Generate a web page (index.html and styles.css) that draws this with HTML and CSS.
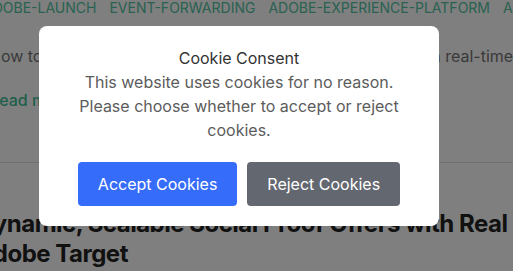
FILE: index.html
```html
<!DOCTYPE html>
<html lang="en">
<head>
<meta charset="utf-8">
<title>Cookie Consent</title>
<link rel="stylesheet" href="styles.css">
</head>
<body>
<div class="page">
  <ul class="tags">
    <li>adobe-launch</li>
    <li>event-forwarding</li>
    <li>adobe-experience-platform</li>
    <li>adobe-target</li>
  </ul>
  <p class="summary">How to create dynamic social proof offers that updates with real-time data from Adobe Experience Platform</p>
  <a class="more" href="#">Read more</a>
  <hr class="divider">
  <h2 class="title">Dynamic, Scalable Social Proof Offers with Real Time Data in Adobe Target</h2>
</div>
<div class="overlay">
  <div class="modal">
    <h3 class="modal-title">Cookie Consent</h3>
    <p class="modal-text">This website uses cookies for no reason. Please choose whether to accept or reject cookies.</p>
    <div class="actions">
      <button class="btn btn-accept">Accept Cookies</button>
      <button class="btn btn-reject">Reject Cookies</button>
    </div>
  </div>
</div>
</body>
</html>
```
FILE: styles.css
```css
html, body {
  margin: 0;
  padding: 0;
  width: 513px;
  height: 271px;
  overflow: hidden;
  background: #ffffff;
  font-family: Inter, "Noto Sans", sans-serif;
}
.page {
  width: 700px;
  margin-left: -11px;
}
.tags {
  list-style: none;
  margin: 0 0 0 -6px;
  padding: 0;
  display: flex;
  gap: 13px;
  white-space: nowrap;
}
.tags li {
  font-size: 14px;
  line-height: 16px;
  text-transform: uppercase;
  color: #52c4a2;
}
.summary {
  margin: 28px 0 0;
  font-size: 16px;
  line-height: 24px;
  color: #757575;
  white-space: nowrap;
}
.more {
  display: block;
  margin-top: 20px;
  font-size: 16px;
  line-height: 24px;
  font-weight: 500;
  color: #3fbf98;
  text-decoration: none;
}
.divider {
  margin: 50px 0 0;
  border: 0;
  border-top: 1px solid #dedede;
}
.title {
  margin: 46px 0 0 -13px;
  font-size: 24px;
  line-height: 30px;
  font-weight: 700;
  letter-spacing: -0.5px;
  color: #222;
}
.overlay {
  position: absolute;
  left: 0;
  top: 0;
  width: 513px;
  height: 271px;
  background: rgba(0, 0, 0, 0.5);
}
.modal {
  box-sizing: border-box;
  width: 400px;
  margin: 26px 0 0 39px;
  padding: 20px;
  background: #fff;
  border-radius: 8px;
  text-align: center;
}
.modal-title {
  margin: 0;
  font-size: 16px;
  line-height: 24px;
  font-weight: 400;
  color: #333;
}
.modal-text {
  margin: 0;
  font-size: 16px;
  line-height: 24px;
  color: #5c5c5c;
}
.actions {
  display: flex;
  justify-content: center;
  gap: 10px;
  margin-top: 20px;
}
.btn {
  border: 0;
  border-radius: 4px;
  padding: 10px 20px;
  font-family: Inter, "Noto Sans", sans-serif;
  font-size: 16px;
  line-height: 24px;
  color: #fff;
  cursor: pointer;
}
.btn-accept {
  background: #366cfa;
}
.btn-reject {
  background: #636870;
}
```
